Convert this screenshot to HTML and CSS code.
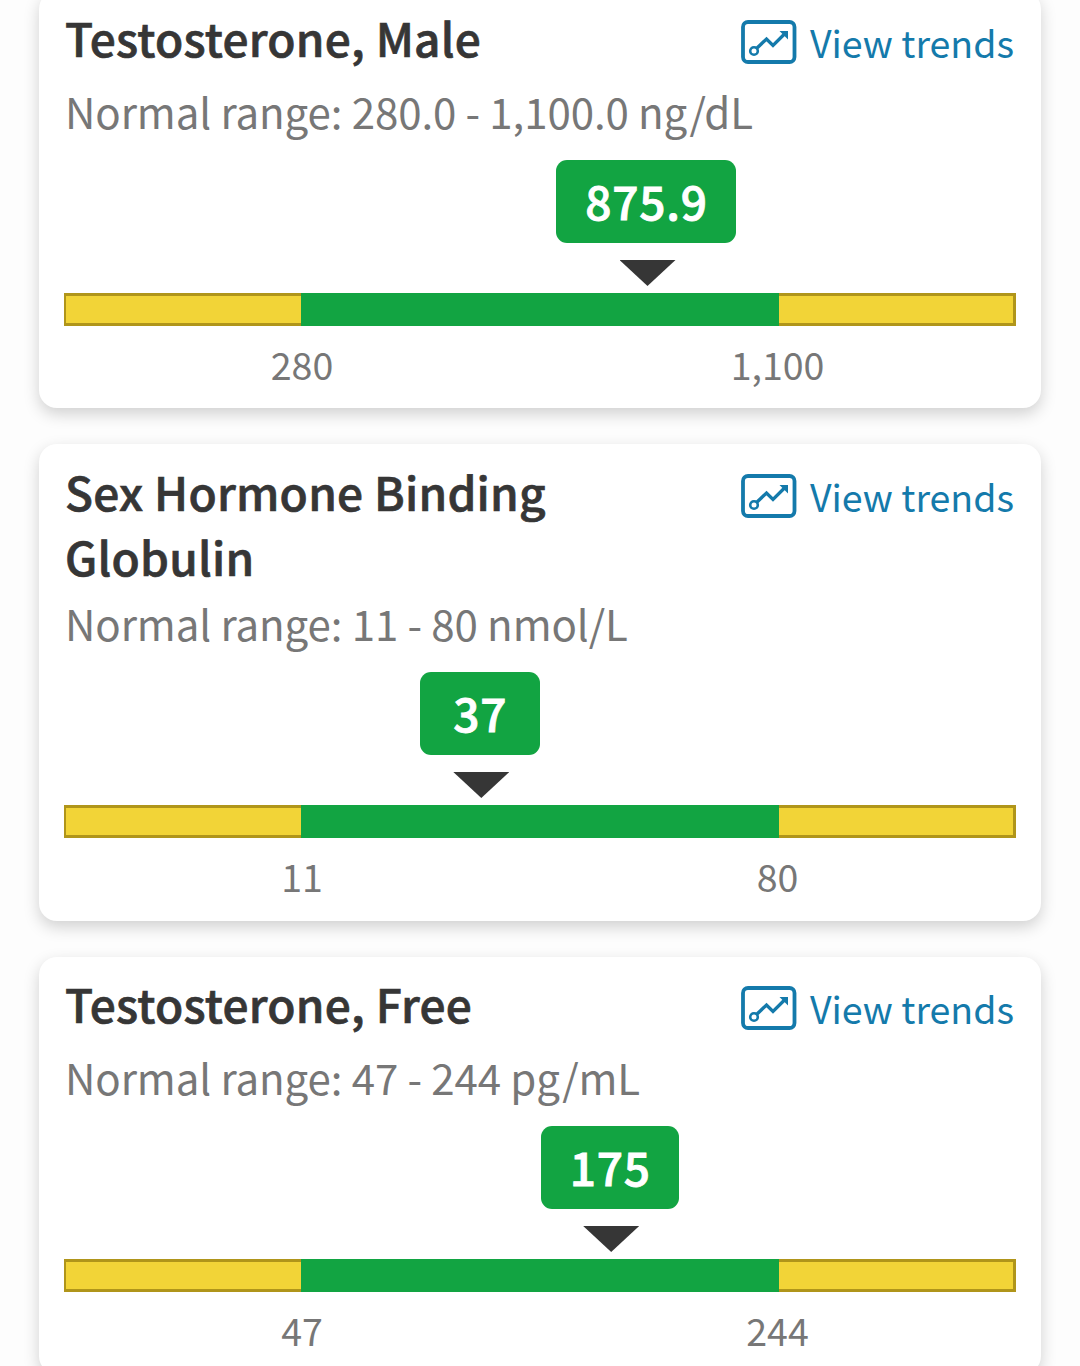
FILE: index.html
```
<!DOCTYPE html>
<html lang="en">

<head>
    <meta charset="UTF-8">
    <meta name="viewport" content="width=device-width, initial-scale=1.0">
    <title>Test results</title>
    <link rel="stylesheet" href="styles.css">
</head>

<body>
    <svg class="sprite" width="0" height="0">
        <symbol id="trend" viewBox="0 0 56 44" fill="none" stroke="currentColor">
            <rect x="2" y="2" width="51.5" height="40" rx="5" stroke-width="3.8"/>
            <circle cx="13" cy="31" r="3.8" stroke-width="2.6"/>
            <path d="M15.8 28.2L25.5 19L32 25.5L44.5 13" stroke-width="3.3"/>
            <path d="M38.5 11H47V19.5Z" fill="currentColor" stroke="none"/>
        </symbol>
    </svg>

    <div class="results">
        <div class="card">
            <div class="card-head">
                <h2>Testosterone, Male</h2>
                <a class="trends" href="#"><svg><use href="#trend"/></svg><span>View trends</span></a>
            </div>
            <p class="range">Normal range: 280.0 - 1,100.0 ng/dL</p>
            <div class="marker" style="margin-left: 583.5px">
                <span class="value">875.9</span>
            </div>
            <div class="bar">
                <span class="low"></span>
                <span class="normal"></span>
                <span class="high"></span>
            </div>
            <div class="limits">
                <span>280</span>
                <span>1,100</span>
            </div>
        </div>

        <div class="card tall">
            <div class="card-head">
                <h2>Sex Hormone Binding Globulin</h2>
                <a class="trends" href="#"><svg><use href="#trend"/></svg><span>View trends</span></a>
            </div>
            <p class="range">Normal range: 11 - 80 nmol/L</p>
            <div class="marker" style="margin-left: 417.3px">
                <span class="value">37</span>
            </div>
            <div class="bar">
                <span class="low"></span>
                <span class="normal"></span>
                <span class="high"></span>
            </div>
            <div class="limits">
                <span>11</span>
                <span>80</span>
            </div>
        </div>

        <div class="card">
            <div class="card-head">
                <h2>Testosterone, Free</h2>
                <a class="trends" href="#"><svg><use href="#trend"/></svg><span>View trends</span></a>
            </div>
            <p class="range">Normal range: 47 - 244 pg/mL</p>
            <div class="marker" style="margin-left: 547.2px">
                <span class="value">175</span>
            </div>
            <div class="bar">
                <span class="low"></span>
                <span class="normal"></span>
                <span class="high"></span>
            </div>
            <div class="limits">
                <span>47</span>
                <span>244</span>
            </div>
        </div>
    </div>
</body>

</html>
```
FILE: styles.css
```
html,
body {
    margin: 0;
    padding: 0;
    height: 100%;
    overflow: hidden;
}
body{
    background: #fdfdfd;
    font-family: "Noto Sans CJK JP", "Noto Sans", sans-serif;
    color: #363636;
}
.sprite{
    display: block;
}
.results{
    display: flex;
    flex-direction: column;
    gap: 36px;
    margin: -9px 39px 0;
}
.card{
    box-sizing: border-box;
    flex: none;
    height: 417px;
    padding: 14px 25px 0;
    border-radius: 18px;
    background: #fff;
    box-shadow: 0 6px 16px rgba(0, 0, 0, 0.18);
}
.card.tall{
    height: 477px;
    padding-top: 15px;
}
.card-head{
    display: flex;
    justify-content: space-between;
    align-items: flex-start;
    height: 70px;
}
.card.tall .card-head{
    height: 128px;
}
.card-head h2{
    width: 560px;
    margin: 0;
    padding-left: 1px;
    font-size: 46px;
    font-weight: 500;
    line-height: 64.5px;
    letter-spacing: 0.25px;
    -webkit-text-stroke: 0.7px #363636;
}
.trends{
    display: flex;
    align-items: center;
    gap: 13px;
    margin: 15px 2px 0 0;
    height: 44px;
    color: #147aab;
    font-size: 37.5px;
    line-height: 44px;
    text-decoration: none;
    white-space: nowrap;
}
.trends svg{
    width: 56px;
    height: 44px;
}
.trends span{
    margin-top: -1px;
}
.range{
    margin: 0;
    padding-left: 1px;
    height: 85px;
    font-size: 42px;
    line-height: 72px;
    letter-spacing: -0.08px;
    color: #777;
    white-space: nowrap;
}
.marker{
    display: flex;
    flex-direction: column;
    align-items: center;
    width: 0;
    height: 133.3px;
}
.value{
    box-sizing: border-box;
    flex: none;
    min-width: 120px;
    height: 82.5px;
    margin-right: 3px;
    padding: 0 28px 0 29px;
    border-radius: 11px;
    background: #12a442;
    color: #fff;
    font-size: 46px;
    font-weight: 500;
    line-height: 80px;
    letter-spacing: 0.8px;
    text-align: center;
    -webkit-text-stroke: 0.9px #fff;
}
.marker:after{
    content: "";
    flex: none;
    width: 56px;
    height: 26px;
    margin-top: 17.5px;
    background: #363636;
    clip-path: polygon(0 0, 100% 0, 50% 100%);
}
.bar{
    display: grid;
    grid-template-columns: 237px 478px 237px;
    height: 33px;
}
.low,
.high{
    box-sizing: border-box;
    border: 3px solid #b0951a;
    background: #f2d437;
}
.low{
    border-left-width: 2px;
    border-right: none;
}
.high{
    border-left: none;
}
.normal{
    background: #12a442;
}
.limits{
    display: flex;
    justify-content: space-between;
    margin: 10px 138.5px 0 138px;
    font-size: 37.5px;
    line-height: 56px;
    color: #777;
}
.limits span{
    width: 200px;
    text-align: center;
}
```
